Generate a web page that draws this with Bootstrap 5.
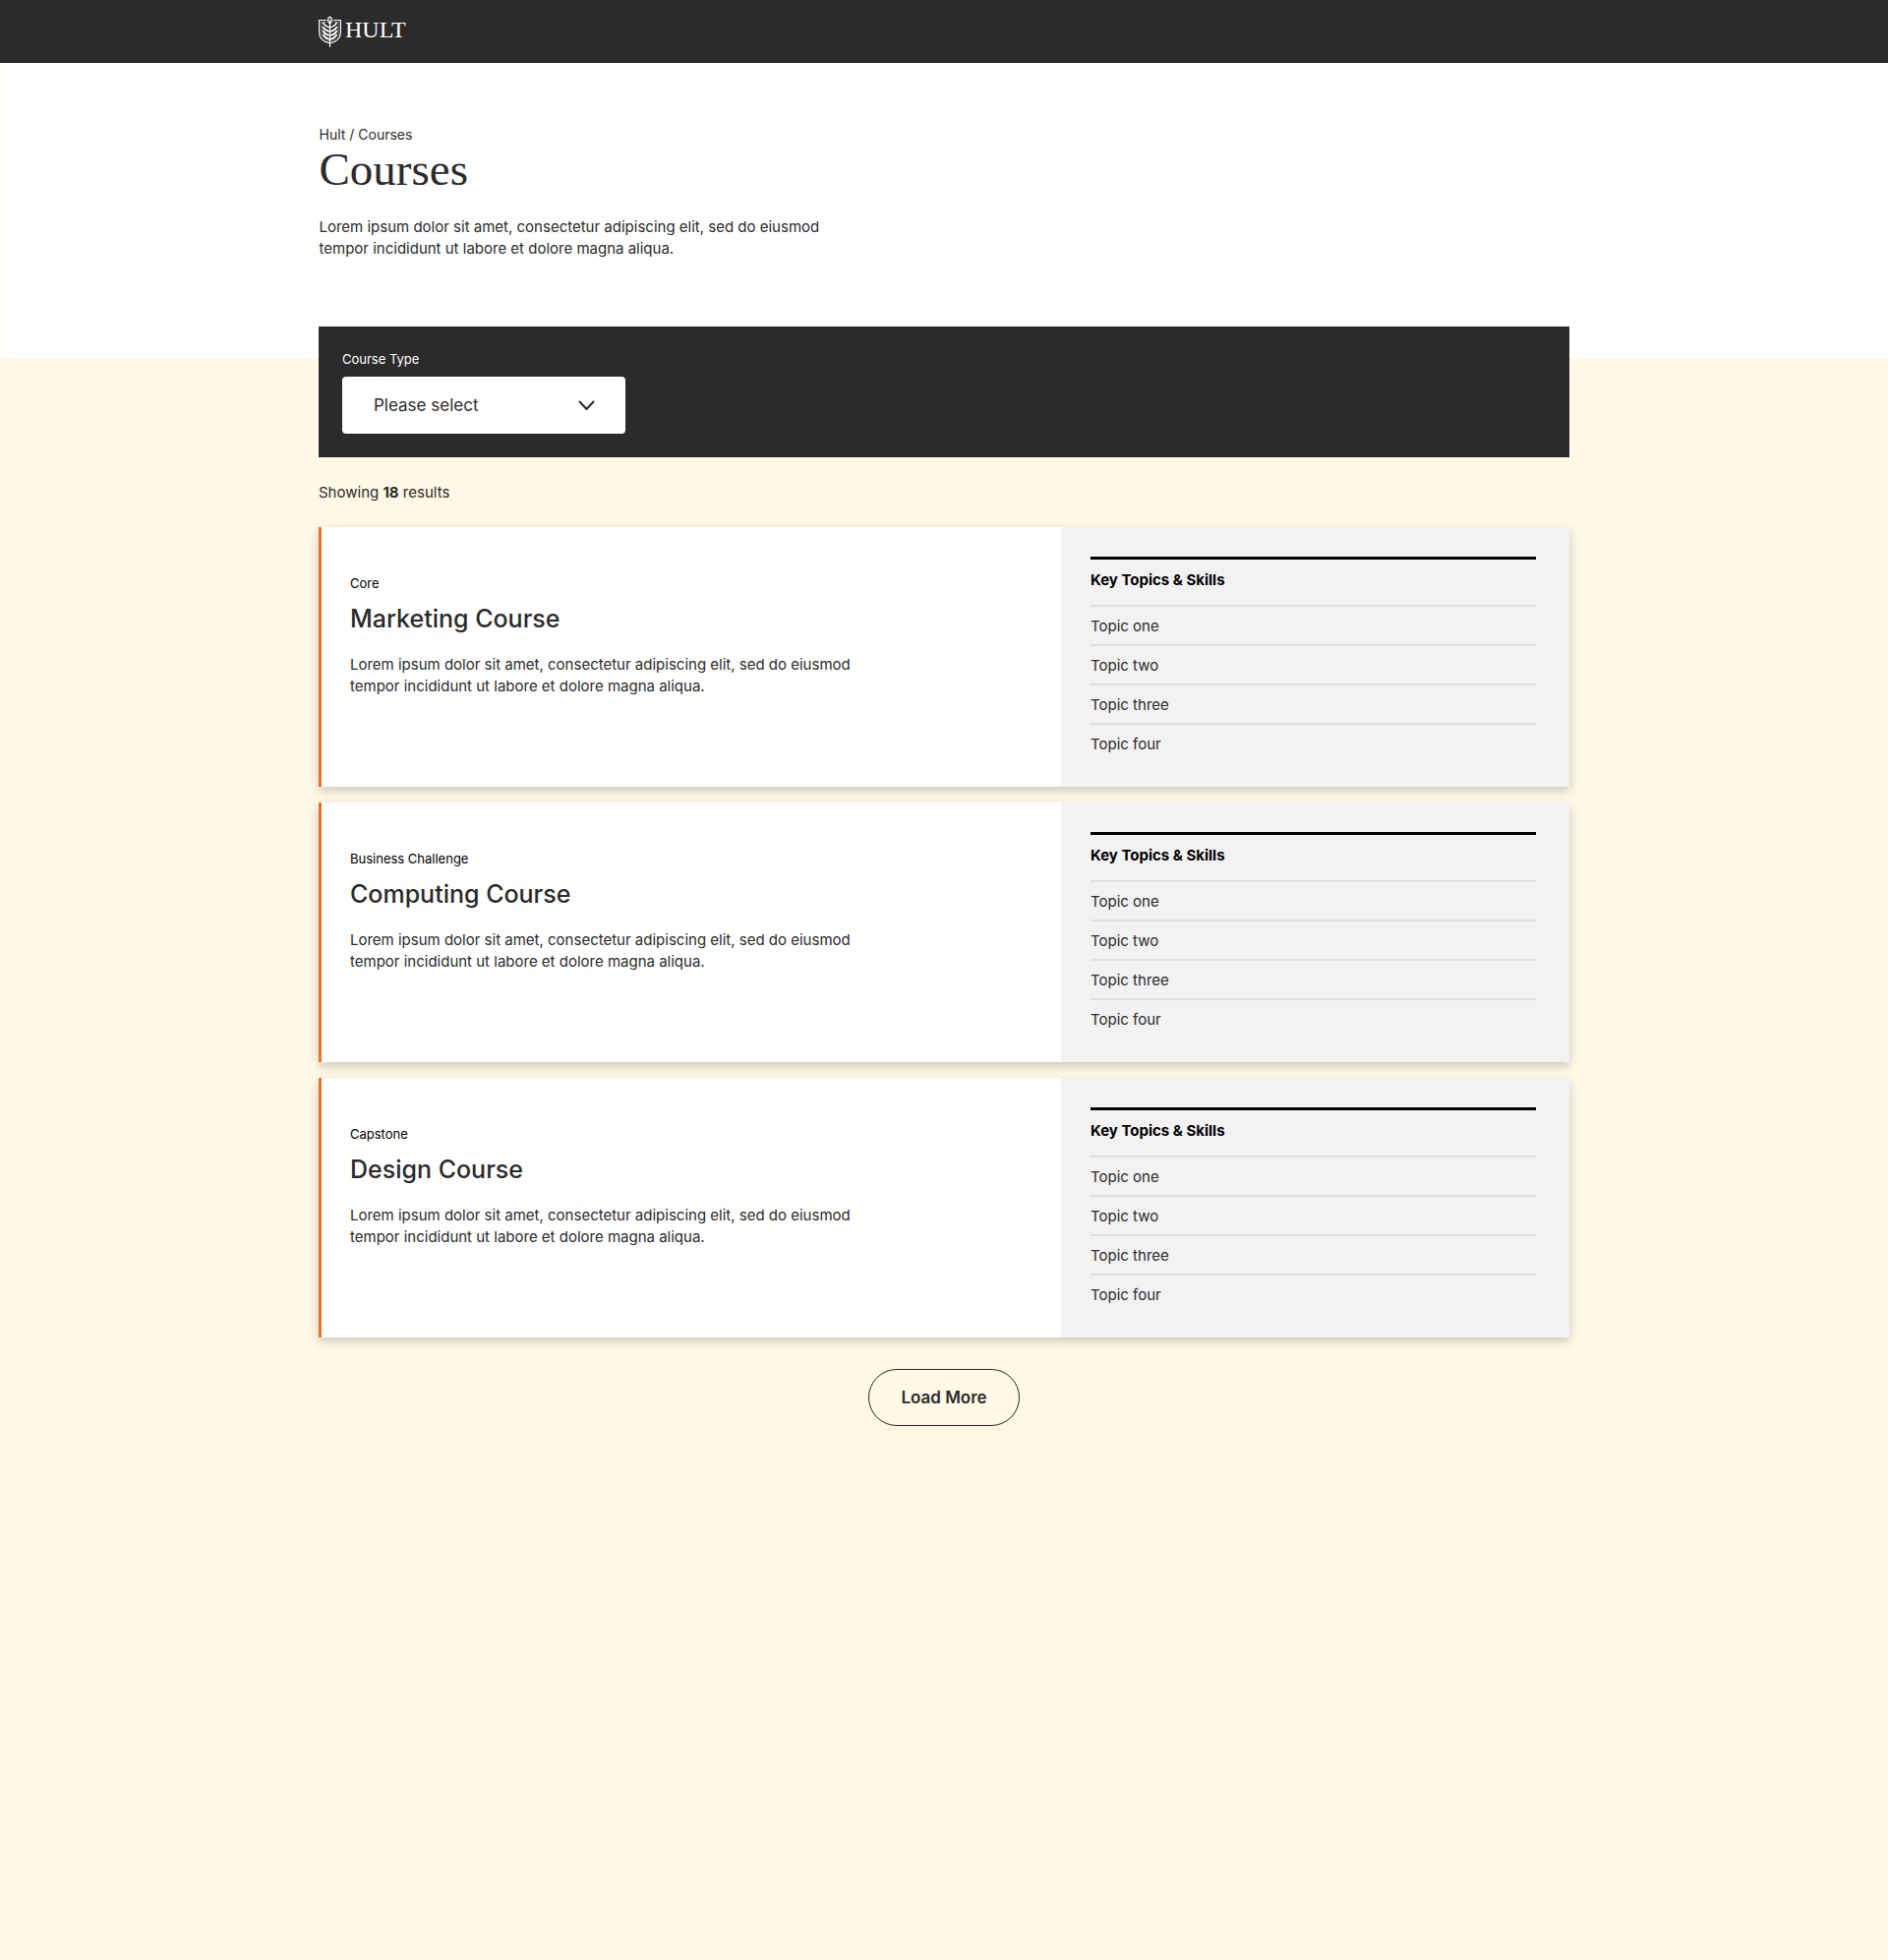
<!DOCTYPE html>
<html lang="en">
<head>
<meta charset="utf-8">
<meta name="viewport" content="width=device-width, initial-scale=1">
<title>Courses | Hult</title>
<link href="https://cdn.jsdelivr.net/npm/bootstrap@5.3.0/dist/css/bootstrap.min.css" rel="stylesheet">
<style>
  :root { --ink: #2b2b2b; --cream: #fff9e6; --accent: #f37021; }
  body { font-family: Inter, "Liberation Sans", sans-serif; font-size: 15px; line-height: 22px; color: var(--ink); background: var(--cream); }
  .page-wrap { max-width: 1296px; }
  .site-header { background: var(--ink); min-height: 64px; }
  .brand-name { font-family: "Liberation Serif", serif; font-size: 24px; line-height: 28px; }
  .hero { background: #fff; margin-left: 1px; padding: 62px 0 100px; }
  .crumbs { font-size: 14px; line-height: 22px; }
  .crumbs a { color: inherit; }
  .page-title { font-family: "Liberation Serif", serif; font-size: 47px; line-height: 48px; }
  .intro { max-width: 536px; }
  .filter-bar { background: var(--ink); margin-top: -32px; padding: 23px 24px 24px; }
  .filter-field { max-width: 288px; }
  .filter-bar label { font-size: 13px; line-height: 20px; }
  .filter-bar .form-select { height: 58px; padding: 2px 56px 0 32px; border: 0; border-radius: 4px; font-size: 17px; color: var(--ink); background-image: none; }
  .chevron { right: 31px; top: 24px; pointer-events: none; }
  .result-count { margin: 25px 0 24px; }
  .course-card { border-left: 3px solid var(--accent); box-shadow: 0 4px 10px rgba(0, 0, 0, .2); }
  .course-main { flex: 1 1 59%; padding: 46px 29px; }
  .course-side { flex: 0 0 517px; padding: 30px 34px 25px 30px; background: #f2f2f2; }
  .course-kind { font-size: 13px; color: #000; }
  .course-name { font-size: 25px; line-height: 34px; font-weight: 500; margin-bottom: 19px; }
  .topics-title { font-size: 15px; line-height: 22px; font-weight: 700; color: #000; border-top: 3px solid #000; padding: 10px 0 14px; }
  .topics li { border-top: 2px solid #dfdfdf; padding: 9px 0 7px; }
  .load-more { height: 58px; padding: 0 32px; border: 1px solid var(--ink); border-radius: 29px; font-size: 17px; font-weight: 600; color: var(--ink); box-shadow: 0 2px 10px rgba(0, 0, 0, .03); }
  @media (max-width: 991px) { .course-side { flex-basis: auto; } }
</style>
</head>
<body>
<header class="site-header d-flex align-items-center">
  <div class="container-fluid page-wrap d-flex">
    <a href="#" class="d-flex align-items-center text-white text-decoration-none" aria-label="Hult">
      <svg width="23" height="32" viewBox="0 0 23 32" fill="none" stroke="#fff" aria-hidden="true">
        <path d="M8 4.500H.6V17c0 6 4.400 9.500 10.900 11 6.500-1.500 10.900-5 10.900-11V4.500H15" stroke-width="1.200"/>
        <path d="M8.200 6.500H2.800V17c0 4.800 3.200 7.600 8.700 9 5.500-1.400 8.700-4.200 8.700-9V6.500h-5.400" stroke-width=".6" opacity=".6"/>
        <path d="M11.500 1C9 3 8.300 5 11.500 8.500 14.700 5 14 3 11.500 1Z" stroke-width="1.200"/>
        <path d="M11.500 4v28" stroke-width="1.200"/>
        <path d="M11.500 12C7.500 11 5.500 9 4.500 6.500M11.500 12c4-1 6-3 7-5.500M11.500 16C8 15.500 5.500 13.500 4.200 11M11.500 16c3.500-.5 6-2.500 7.300-5M11.500 20C8 19.500 5.500 17.500 4.200 15M11.500 20c3.500-.5 6-2.500 7.300-5M11.500 24C8.500 23.500 6 21.500 4.500 19M11.500 24c3-.5 5.500-2.500 7-5" stroke-width="1.700"/>
      </svg>
      <span class="brand-name ms-1 pb-1">HULT</span>
    </a>
  </div>
</header>

<section class="hero">
  <div class="container-fluid page-wrap">
    <nav class="crumbs" aria-label="Breadcrumb"><a href="#" class="text-decoration-none">Hult</a> / <span>Courses</span></nav>
    <h1 class="page-title fw-normal mb-4">Courses</h1>
    <p class="intro mb-0">Lorem ipsum dolor sit amet, consectetur adipiscing elit, sed do eiusmod tempor incididunt ut labore et dolore magna aliqua.</p>
  </div>
</section>

<main class="container-fluid page-wrap">
  <form class="filter-bar position-relative">
    <div class="filter-field">
      <label for="courseType" class="text-white d-block mb-2">Course Type</label>
      <div class="position-relative">
        <select id="courseType" class="form-select">
          <option>Please select</option>
          <option>Core</option>
          <option>Business Challenge</option>
          <option>Capstone</option>
        </select>
        <svg class="chevron position-absolute" width="17" height="11" viewBox="0 0 17 11" fill="none" stroke="#2b2b2b" stroke-width="2" stroke-linecap="round" stroke-linejoin="round" aria-hidden="true"><path d="M1.500 1.500l7 7.500 7-7.500"/></svg>
      </div>
    </div>
  </form>

  <p class="result-count">Showing <strong>18</strong> results</p>

  <div class="d-flex flex-column gap-3">
    <article class="course-card d-flex flex-column flex-lg-row bg-white">
      <div class="course-main">
        <div class="course-kind mb-2">Core</div>
        <h2 class="course-name">Marketing Course</h2>
        <p class="intro mb-0">Lorem ipsum dolor sit amet, consectetur adipiscing elit, sed do eiusmod tempor incididunt ut labore et dolore magna aliqua.</p>
      </div>
      <div class="course-side">
        <h3 class="topics-title mb-0">Key Topics &amp; Skills</h3>
        <ul class="topics list-unstyled mb-0"><li>Topic one</li><li>Topic two</li><li>Topic three</li><li>Topic four</li></ul>
      </div>
    </article>
    <article class="course-card d-flex flex-column flex-lg-row bg-white">
      <div class="course-main">
        <div class="course-kind mb-2">Business Challenge</div>
        <h2 class="course-name">Computing Course</h2>
        <p class="intro mb-0">Lorem ipsum dolor sit amet, consectetur adipiscing elit, sed do eiusmod tempor incididunt ut labore et dolore magna aliqua.</p>
      </div>
      <div class="course-side">
        <h3 class="topics-title mb-0">Key Topics &amp; Skills</h3>
        <ul class="topics list-unstyled mb-0"><li>Topic one</li><li>Topic two</li><li>Topic three</li><li>Topic four</li></ul>
      </div>
    </article>
    <article class="course-card d-flex flex-column flex-lg-row bg-white">
      <div class="course-main">
        <div class="course-kind mb-2">Capstone</div>
        <h2 class="course-name">Design Course</h2>
        <p class="intro mb-0">Lorem ipsum dolor sit amet, consectetur adipiscing elit, sed do eiusmod tempor incididunt ut labore et dolore magna aliqua.</p>
      </div>
      <div class="course-side">
        <h3 class="topics-title mb-0">Key Topics &amp; Skills</h3>
        <ul class="topics list-unstyled mb-0"><li>Topic one</li><li>Topic two</li><li>Topic three</li><li>Topic four</li></ul>
      </div>
    </article>
  </div>

  <div class="text-center py-4 my-2">
    <button type="button" class="load-more bg-transparent">Load More</button>
  </div>
</main>
<script src="https://cdn.jsdelivr.net/npm/bootstrap@5.3.0/dist/js/bootstrap.bundle.min.js"></script>
</body>
</html>
